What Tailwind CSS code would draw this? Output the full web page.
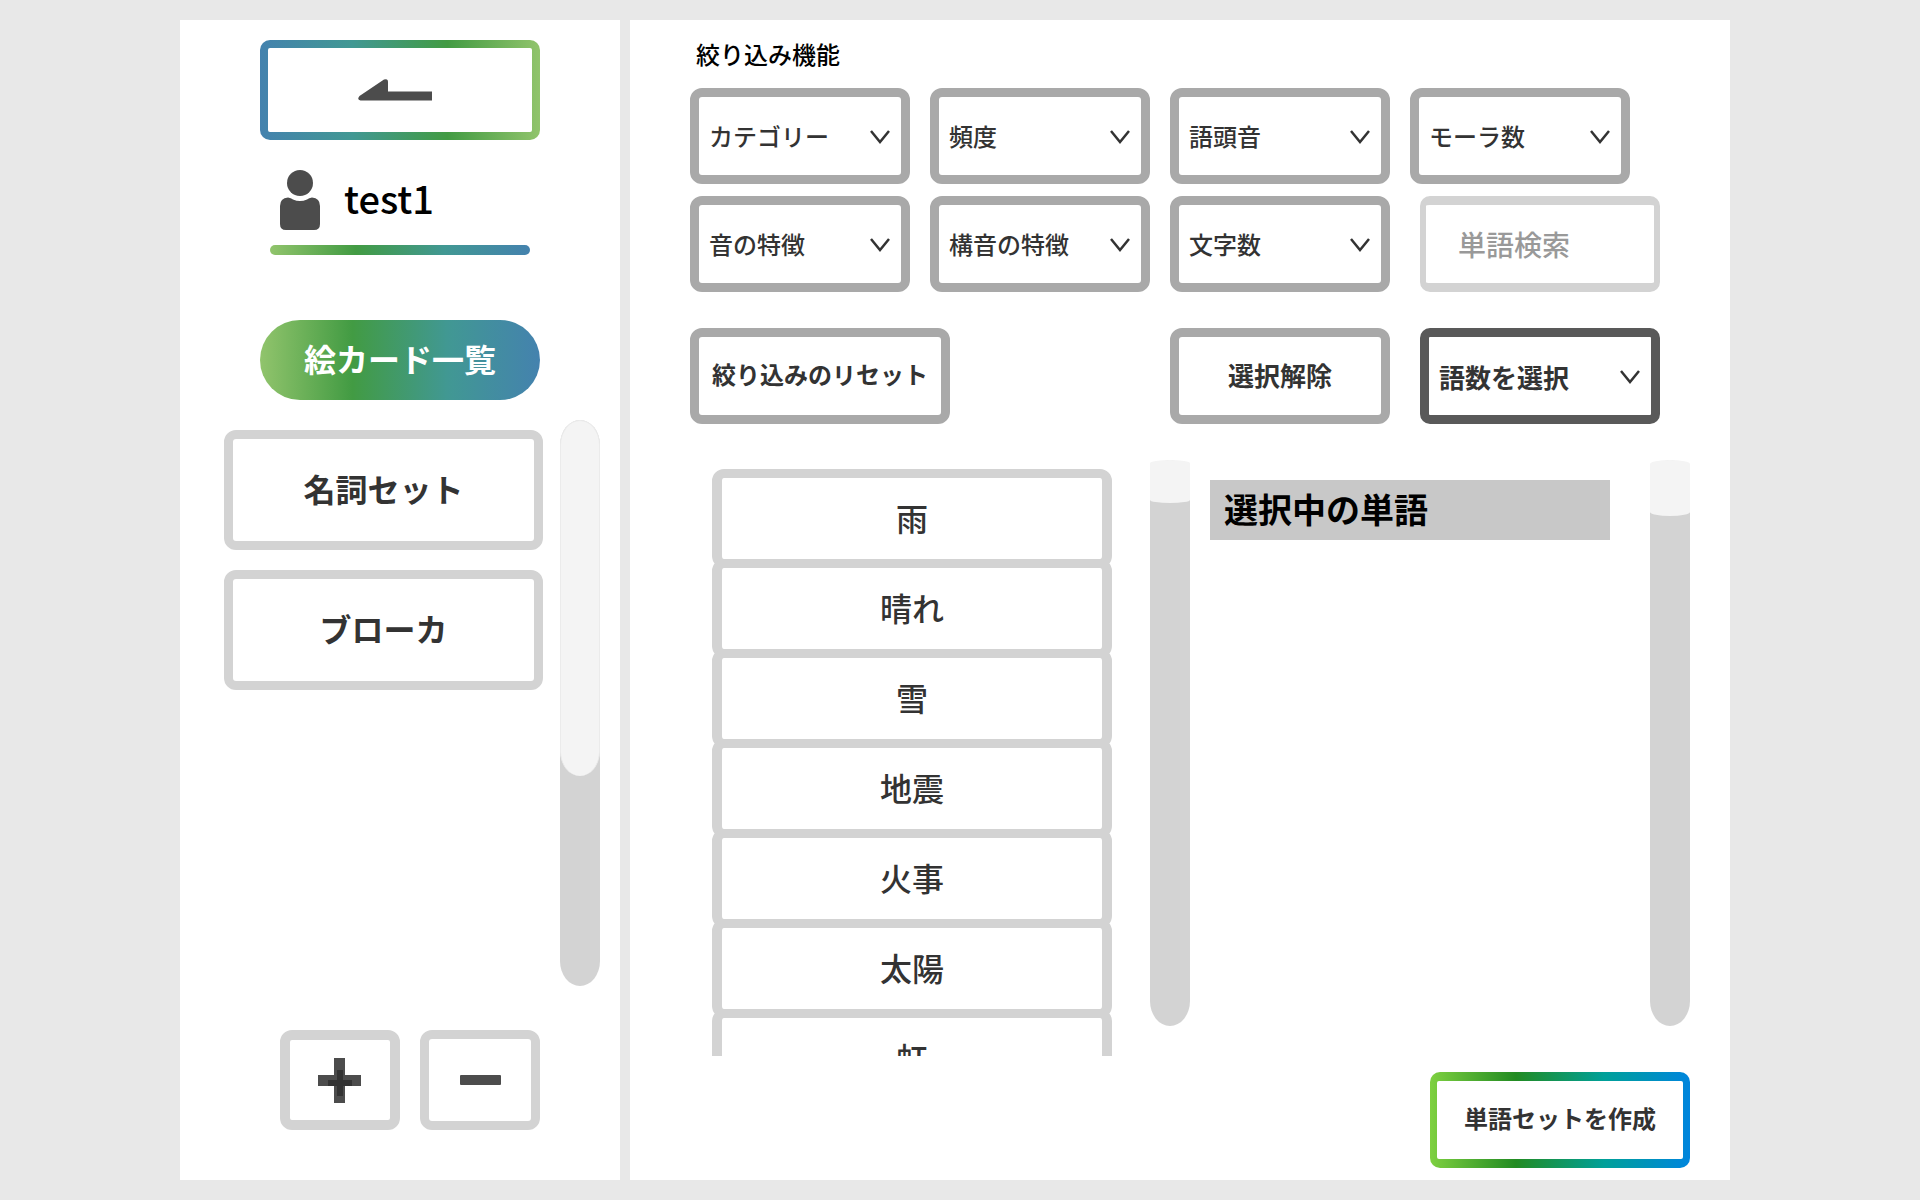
<!DOCTYPE html>
<html lang="ja">

<head>
    <meta charset="UTF-8">
    <meta name="viewport" content="width=device-width, initial-scale=1.0">
    <title>絵カード一覧</title>
    <script src="https://cdn.jsdelivr.net/npm/@tailwindcss/browser@4"></script>
</head>

<body class="bg-[#e8e8e8] min-h-screen py-5 pr-[10px] text-[#333] font-['Noto_Sans_CJK_JP','Noto_Sans',sans-serif]">
    <div class="flex gap-[10px] w-full max-w-[1550px] mx-auto">

        <!-- Sidebar -->
        <aside class="w-[440px] shrink-0 bg-white pt-5 pb-[50px]">
            <div class="w-[280px] mx-auto">
                <button type="button" aria-label="戻る"
                    class="block w-full h-[100px] p-2 rounded-[10px] bg-[linear-gradient(to_right,#4482ae,#419893_33%,#429b43_67%,#91c46c)]">
                    <span class="flex items-center justify-center w-full h-full bg-white rounded-xs">
                        <svg width="84" height="22" viewBox="0 0 84 22" fill="#4c4c4c">
                            <path d="M1.500 17L26 0.600Q30 -1 30 3V12.500H74V21.500H2.500Q-1.500 20.500 1.500 17Z" />
                        </svg>
                    </span>
                </button>

                <div class="flex items-center gap-6 px-5 mt-[30px] h-[60px]">
                    <svg width="40" height="60" viewBox="0 0 40 60" fill="#4c4c4c">
                        <circle cx="20" cy="13" r="13" />
                        <path d="M0 36Q0 28 8 27.500Q11 28 13 29.500Q20 32.500 27 29.500Q29 28 32 27.500Q40 28 40 36V54Q40 60 34 60H6Q0 60 0 54Z" />
                    </svg>
                    <p class="pb-1 text-[38px] leading-[56px] font-medium text-black">test1</p>
                </div>
                <div class="mx-[10px] mt-[15px] h-[10px] rounded-full bg-[linear-gradient(to_right,#91c46c,#429b43_33%,#419893_67%,#4482ae)]"></div>

                <button type="button"
                    class="block w-full h-20 mt-[65px] pb-1 rounded-full text-[32px] font-bold text-white bg-[linear-gradient(to_right,#91c46c,#429b43_33%,#419893_67%,#4482ae)]">絵カード一覧</button>
            </div>

            <div class="flex mt-5 pl-11 pr-5 gap-[17px]">
                <div class="flex-1 flex flex-col gap-5 pt-[10px]">
                    <button type="button" class="h-[120px] pb-1 bg-white border-[9px] border-[#d3d3d3] rounded-xl text-[32px] font-bold">名詞セット</button>
                    <button type="button" class="h-[120px] pb-1 bg-white border-[9px] border-[#d3d3d3] rounded-xl text-[32px] font-bold">ブローカ</button>
                </div>
                <div class="w-10 h-[566px] bg-[#d3d3d3] rounded-[20px/25px]">
                    <div class="h-[356px] bg-[#f4f4f4] rounded-[20px/25px] border border-b-0 border-[#ebebeb]"></div>
                </div>
            </div>

            <div class="flex justify-end gap-5 w-[280px] mx-auto mt-11">
                <button type="button" aria-label="追加"
                    class="flex items-center justify-center w-[120px] h-[100px] bg-white border-[10px] border-[#d3d3d3] rounded-xl">
                    <svg width="46" height="46" viewBox="0 0 46 46">
                        <path d="M17 1H28V18H44V29H28V46H17V29H1V18H17Z" fill="#4c4c4c" />
                        <path d="M20 13H26V23H35V29H26V39H20V29H11V23H20Z" fill="#333" />
                    </svg>
                </button>
                <button type="button" aria-label="削除"
                    class="flex items-center justify-center w-[120px] h-[100px] bg-white border-[9px] border-[#d3d3d3] rounded-xl">
                    <svg width="42" height="12" viewBox="0 0 42 12">
                        <rect x="1" y="1" width="41" height="10" rx="1" fill="#4c4c4c" />
                    </svg>
                </button>
            </div>
        </aside>

        <!-- Main -->
        <main class="flex-1 bg-white pl-[60px] pr-10 pb-3">
            <h1 class="flex items-center h-[68px] pl-[6px] text-2xl font-medium text-black">絞り込み機能</h1>

            <div class="grid grid-cols-[220px_220px_220px_250px] gap-x-5 gap-y-3">
                <div class="relative w-[220px]">
                    <select aria-label="カテゴリー" class="appearance-none w-full h-24 pl-[10px] bg-white border-[9px] border-[#a9a9a9] rounded-xl text-2xl font-medium">
                        <option>カテゴリー</option>
                    </select>
                    <svg class="absolute right-5 top-[42px] pointer-events-none" width="20" height="14" viewBox="0 0 20 14" fill="none" stroke="#333" stroke-width="2.5"><path d="M1 1L10 12L19 1" /></svg>
                </div>
                <div class="relative w-[220px]">
                    <select aria-label="頻度" class="appearance-none w-full h-24 pl-[10px] bg-white border-[9px] border-[#a9a9a9] rounded-xl text-2xl font-medium">
                        <option>頻度</option>
                    </select>
                    <svg class="absolute right-5 top-[42px] pointer-events-none" width="20" height="14" viewBox="0 0 20 14" fill="none" stroke="#333" stroke-width="2.5"><path d="M1 1L10 12L19 1" /></svg>
                </div>
                <div class="relative w-[220px]">
                    <select aria-label="語頭音" class="appearance-none w-full h-24 pl-[10px] bg-white border-[9px] border-[#a9a9a9] rounded-xl text-2xl font-medium">
                        <option>語頭音</option>
                    </select>
                    <svg class="absolute right-5 top-[42px] pointer-events-none" width="20" height="14" viewBox="0 0 20 14" fill="none" stroke="#333" stroke-width="2.5"><path d="M1 1L10 12L19 1" /></svg>
                </div>
                <div class="relative w-[220px]">
                    <select aria-label="モーラ数" class="appearance-none w-full h-24 pl-[10px] bg-white border-[9px] border-[#a9a9a9] rounded-xl text-2xl font-medium">
                        <option>モーラ数</option>
                    </select>
                    <svg class="absolute right-5 top-[42px] pointer-events-none" width="20" height="14" viewBox="0 0 20 14" fill="none" stroke="#333" stroke-width="2.5"><path d="M1 1L10 12L19 1" /></svg>
                </div>
                <div class="relative w-[220px]">
                    <select aria-label="音の特徴" class="appearance-none w-full h-24 pl-[10px] bg-white border-[9px] border-[#a9a9a9] rounded-xl text-2xl font-medium">
                        <option>音の特徴</option>
                    </select>
                    <svg class="absolute right-5 top-[42px] pointer-events-none" width="20" height="14" viewBox="0 0 20 14" fill="none" stroke="#333" stroke-width="2.5"><path d="M1 1L10 12L19 1" /></svg>
                </div>
                <div class="relative w-[220px]">
                    <select aria-label="構音の特徴" class="appearance-none w-full h-24 pl-[10px] bg-white border-[9px] border-[#a9a9a9] rounded-xl text-2xl font-medium">
                        <option>構音の特徴</option>
                    </select>
                    <svg class="absolute right-5 top-[42px] pointer-events-none" width="20" height="14" viewBox="0 0 20 14" fill="none" stroke="#333" stroke-width="2.5"><path d="M1 1L10 12L19 1" /></svg>
                </div>
                <div class="relative w-[220px]">
                    <select aria-label="文字数" class="appearance-none w-full h-24 pl-[10px] bg-white border-[9px] border-[#a9a9a9] rounded-xl text-2xl font-medium">
                        <option>文字数</option>
                    </select>
                    <svg class="absolute right-5 top-[42px] pointer-events-none" width="20" height="14" viewBox="0 0 20 14" fill="none" stroke="#333" stroke-width="2.5"><path d="M1 1L10 12L19 1" /></svg>
                </div>
                <input type="text" aria-label="単語検索" placeholder="単語検索"
                    class="w-[240px] h-24 ml-[10px] pl-8 pr-4 bg-white border-x-[6px] border-y-[9px] border-[#d3d3d3] rounded-[10px] text-[28px] font-medium placeholder:text-[#999]">

                <button type="button"
                    class="col-span-2 w-[260px] h-24 mt-6 pb-1 bg-white border-[9px] border-[#a9a9a9] rounded-xl text-2xl font-bold">絞り込みのリセット</button>
                <button type="button"
                    class="w-[220px] h-24 mt-6 pb-1 bg-white border-[9px] border-[#a9a9a9] rounded-xl text-[26px] font-bold">選択解除</button>
                <div class="relative w-[240px] ml-[10px] mt-6">
                    <select aria-label="語数を選択" class="appearance-none w-full h-24 pl-[10px] bg-white border-[9px] border-[#595959] rounded-[10px] text-[26px] font-bold">
                        <option>語数を選択</option>
                    </select>
                    <svg class="absolute right-5 top-[42px] pointer-events-none" width="20" height="14" viewBox="0 0 20 14" fill="none" stroke="#333" stroke-width="2.5"><path d="M1 1L10 12L19 1" /></svg>
                </div>
            </div>

            <div class="flex items-start mt-9 pl-[22px]">
                <ul class="flex-1 h-[596px] pt-[9px] overflow-hidden">
                    <li><button type="button" class="block w-full h-[99px] pb-1 border-x-[10px] border-y-[9px] border-[#d3d3d3] rounded-xl text-[32px] font-medium">雨</button></li>
                    <li class="-mt-[9px]"><button type="button" class="block w-full h-[99px] pb-1 border-x-[10px] border-y-[9px] border-[#d3d3d3] rounded-xl text-[32px] font-medium">晴れ</button></li>
                    <li class="-mt-[9px]"><button type="button" class="block w-full h-[99px] pb-1 border-x-[10px] border-y-[9px] border-[#d3d3d3] rounded-xl text-[32px] font-medium">雪</button></li>
                    <li class="-mt-[9px]"><button type="button" class="block w-full h-[99px] pb-1 border-x-[10px] border-y-[9px] border-[#d3d3d3] rounded-xl text-[32px] font-medium">地震</button></li>
                    <li class="-mt-[9px]"><button type="button" class="block w-full h-[99px] pb-1 border-x-[10px] border-y-[9px] border-[#d3d3d3] rounded-xl text-[32px] font-medium">火事</button></li>
                    <li class="-mt-[9px]"><button type="button" class="block w-full h-[99px] pb-1 border-x-[10px] border-y-[9px] border-[#d3d3d3] rounded-xl text-[32px] font-medium">太陽</button></li>
                    <li class="-mt-[9px]"><button type="button" class="block w-full h-[99px] pb-1 border-x-[10px] border-y-[9px] border-[#d3d3d3] rounded-xl text-[32px] font-medium">虹</button></li>
                </ul>
                <div class="w-10 h-[566px] ml-[38px] bg-[#d3d3d3] rounded-[20px/25px]">
                    <div class="h-[43px] bg-[#f4f4f4] rounded-[20px/3px]"></div>
                </div>
                <section class="flex-1 ml-5 mr-10 pt-5">
                    <h2 class="flex items-center h-[60px] pl-[14px] pb-1 bg-[#c8c8c8] text-[34px] font-bold text-black">選択中の単語</h2>
                </section>
                <div class="w-10 h-[566px] bg-[#d3d3d3] rounded-[20px/25px]">
                    <div class="h-14 bg-[#f4f4f4] rounded-[20px/4px]"></div>
                </div>
            </div>

            <button type="button"
                class="block w-[260px] h-24 mt-4 ml-auto px-[7px] py-[9px] rounded-[10px] bg-[linear-gradient(to_right,#7ed040,#228b22_33%,#00a099_67%,#0085dd)]">
                <span class="flex items-center justify-center w-full h-full pb-1 bg-white rounded-xs text-2xl font-bold">単語セットを作成</span>
            </button>
        </main>
    </div>
</body>

</html>
